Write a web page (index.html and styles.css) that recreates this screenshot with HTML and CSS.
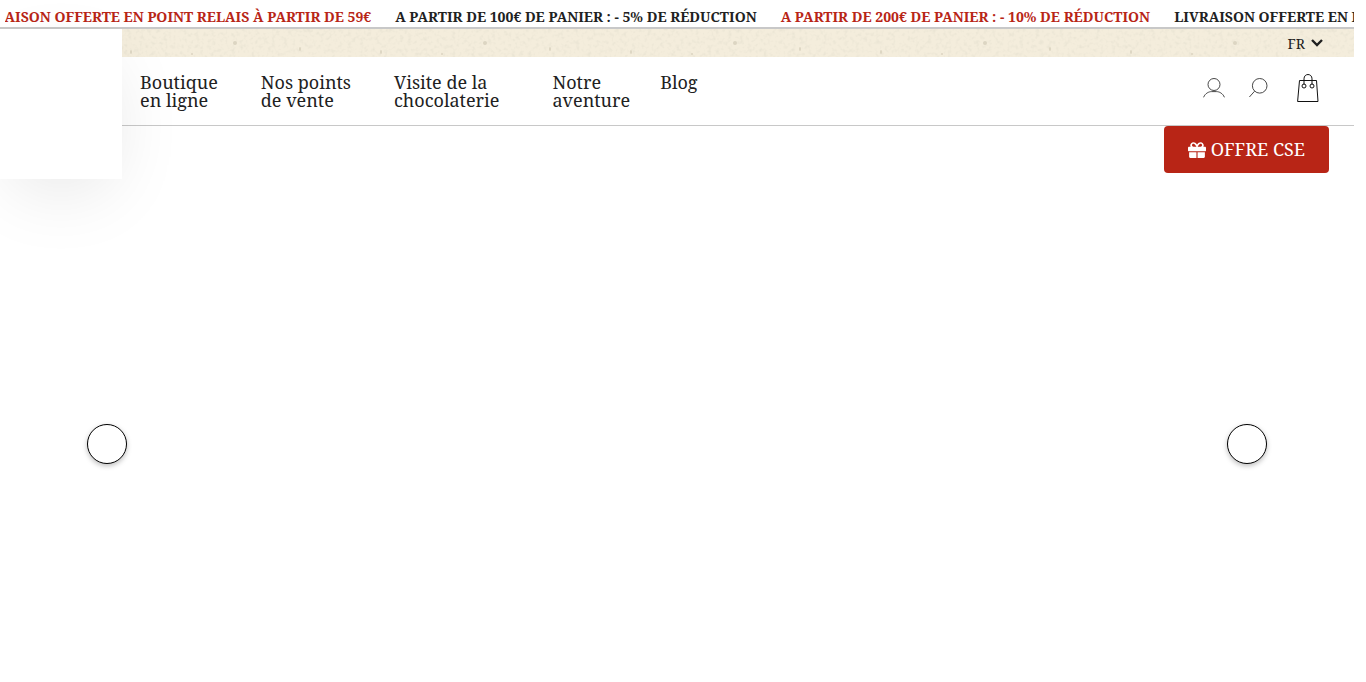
FILE: index.html
```html
<!DOCTYPE html>
<html lang="fr">
<head>
    <meta charset="utf-8">
    <meta name="viewport" content="width=device-width, initial-scale=1.0">
    <title>Chocolaterie</title>
    <link rel="stylesheet" href="styles.css">
</head>
<body>
    <div class="promo">
        <div class="promo-window">
            <div class="promo-track">
                <span class="promo-item red">LIVRAISON OFFERTE EN POINT RELAIS À PARTIR DE 59€</span>
                <span class="promo-item">A PARTIR DE 100€ DE PANIER : - 5% DE RÉDUCTION</span>
                <span class="promo-item red">A PARTIR DE 200€ DE PANIER : - 10% DE RÉDUCTION</span>
                <span class="promo-item">LIVRAISON OFFERTE EN POINT RELAIS À PARTIR DE 59€</span>
            </div>
        </div>
    </div>

    <header class="header">
        <a class="logo" href="#" aria-label="Accueil"></a>

        <div class="lang-bar">
            <svg class="paper" width="100%" height="100%" aria-hidden="true">
                <defs>
                    <filter id="grain" x="0" y="0" width="100%" height="100%">
                        <feTurbulence type="fractalNoise" baseFrequency="0.25" numOctaves="3" seed="4"/>
                        <feColorMatrix values="0 0 0 0 0.8  0 0 0 0 0.76  0 0 0 0 0.64  2 0 0 0 -0.95"/>
                    </filter>
                    <pattern id="specks" width="250" height="28" patternUnits="userSpaceOnUse">
                        <g fill="#dcd5c2">
                            <ellipse cx="235" cy="14" rx="2" ry="2"/>
                            <ellipse cx="50" cy="20" rx="1" ry="2"/>
                            <ellipse cx="131" cy="23" rx="1" ry="2"/>
                            <circle cx="192" cy="25" r="1"/>
                        </g>
                    </pattern>
                </defs>
                <rect width="100%" height="100%" filter="url(#grain)"/>
                <rect width="100%" height="100%" fill="url(#specks)"/>
            </svg>
            <button class="lang" type="button">FR
                <svg width="12" height="12" viewBox="0 0 12 12" aria-hidden="true"><path d="M1 2 6 7 11 2" fill="none" stroke="#212121" stroke-width="2.4"/></svg>
            </button>
        </div>

        <div class="nav-bar">
            <nav class="menu">
                <a class="menu-item" href="#">Boutique<br>en ligne</a>
                <a class="menu-item" href="#">Nos points<br>de vente</a>
                <a class="menu-item wide" href="#">Visite de la<br>chocolaterie</a>
                <a class="menu-item last" href="#">Notre<br>aventure</a>
                <a class="menu-item last" href="#">Blog</a>
            </nav>
            <div class="tools">
                <a href="#" aria-label="Mon compte">
                    <svg width="22" height="20" viewBox="0 0 22 20"><g fill="none" stroke="#333" stroke-width=".9"><circle cx="11" cy="6.500" r="6"/><path d="M.6 19.300C2.200 15.200 6 13.600 8.500 13.600h5c2.500 0 6.300 1.600 7.900 5.700"/></g></svg>
                </a>
                <a href="#" aria-label="Rechercher">
                    <svg width="20" height="20" viewBox="0 0 20 20"><g fill="none" stroke="#333" stroke-width=".9"><circle cx="10.700" cy="7.800" r="7.300"/><path d="M5.600 13.200.4 19"/></g></svg>
                </a>
                <a class="cart" href="#" aria-label="Panier">
                    <svg width="22" height="28" viewBox="0 0 22 28"><g fill="none" stroke="#111"><path d="M2.500 6.500h17l1.500 21H.6z"/><circle cx="7" cy="12" r="2"/><circle cx="15" cy="12" r="2"/><path d="M7 10.500V4.800c0-5.700 8-5.700 8 0v5.700"/></g></svg>
                </a>
            </div>
        </div>
    </header>

    <main>
        <div class="offer-row">
            <a class="offer" href="#">
                <svg width="18" height="16" viewBox="0 0 512 448" aria-hidden="true"><path fill="#fff" d="M32 416c0 18 14 32 32 32h176V288H32zm240 32h176c18 0 32-14 32-32V288H272zm208-320h-42c6-12 10-26 10-40 0-49-39-88-88-88-42 0-69 22-103 68C223 22 196 0 154 0c-49 0-90 39-90 88 0 14 3 28 10 40H32c-18 0-32 14-32 32v80c0 9 7 16 16 16h480c9 0 16-7 16-16v-80c0-18-14-32-32-32zm-326 0c-22 0-40-18-40-40s18-40 40-40c20 0 35 3 86 80zm206 0h-86c51-77 65-80 86-80 22 0 40 18 40 40s-18 40-40 40z"/></svg>
                OFFRE CSE
            </a>
        </div>
        <div class="slider">
            <button class="arrow" type="button" aria-label="Précédent"></button>
            <button class="arrow" type="button" aria-label="Suivant"></button>
        </div>
    </main>
</body>
</html>
```
FILE: styles.css
```css
body {
    margin: 0 12px 0 0;
    background-color: #fff;
    color: #212121;
    font-family: "Noto Serif", "Droid Serif", "Liberation Serif", serif;
}

a {
    color: inherit;
    text-decoration: none;
}

svg {
    display: block;
}

.promo {
    padding: 7px 0 0 5px;
    border-bottom: 2px solid #c8c8c8;
}

.promo-window {
    overflow: hidden;
}

.promo-track {
    display: flex;
    gap: 24px;
    margin-left: -35px;
    font-size: 14px;
    font-weight: bold;
    line-height: 20px;
    white-space: nowrap;
}

.red {
    color: #b82516;
}

.header {
    position: relative;
    border-bottom: 1px solid #c8c8c8;
}

/* the logo panel hangs below the header */
.logo {
    position: absolute;
    top: 0;
    left: 0;
    z-index: 2;
    width: 122px;
    height: 150px;
    background-color: #fff;
    box-shadow: 0 22px 80px -20px rgba(0, 0, 0, 0.14);
}

.lang-bar {
    position: relative;
    display: flex;
    justify-content: flex-end;
    height: 28px;
    padding-right: 31px;
    background-color: #f4eddc;
}

.paper {
    position: absolute;
    top: 0;
    left: 0;
}

.lang {
    position: relative;
    display: flex;
    align-items: center;
    gap: 6px;
    padding: 2px 0 0;
    border: none;
    background: none;
    color: inherit;
    font: 14px/28px "Noto Serif", "Droid Serif", "Liberation Serif", serif;
}

.nav-bar {
    display: flex;
    justify-content: space-between;
    height: 68px;
    padding: 0 35px 0 140px;
}

.menu {
    display: flex;
    gap: 30px;
    padding-top: 16px;
    font-size: 18px;
    line-height: 18px;
}

.menu-item {
    padding-right: 13px;
}

.menu-item.wide {
    padding-right: 23px;
}

.menu-item.last {
    padding-right: 0;
}

.tools {
    display: flex;
    align-items: center;
    gap: 24px;
    height: 62px;
}

.cart {
    padding-left: 4px;
}

.offer-row {
    display: flex;
    justify-content: flex-end;
    padding-right: 25px;
}

.offer {
    display: flex;
    align-items: center;
    gap: 5px;
    padding: 0 24px;
    border-radius: 4px;
    background-color: #b82516;
    color: #fff;
    font-size: 18px;
    line-height: 47px;
}

.slider {
    display: flex;
    justify-content: space-between;
    padding: 251px 87px 100px;
}

.arrow {
    width: 40px;
    height: 40px;
    border: 1px solid #000;
    border-radius: 50%;
    background-color: #fff;
    box-shadow: 0 2px 5px rgba(0, 0, 0, 0.25);
}
```
